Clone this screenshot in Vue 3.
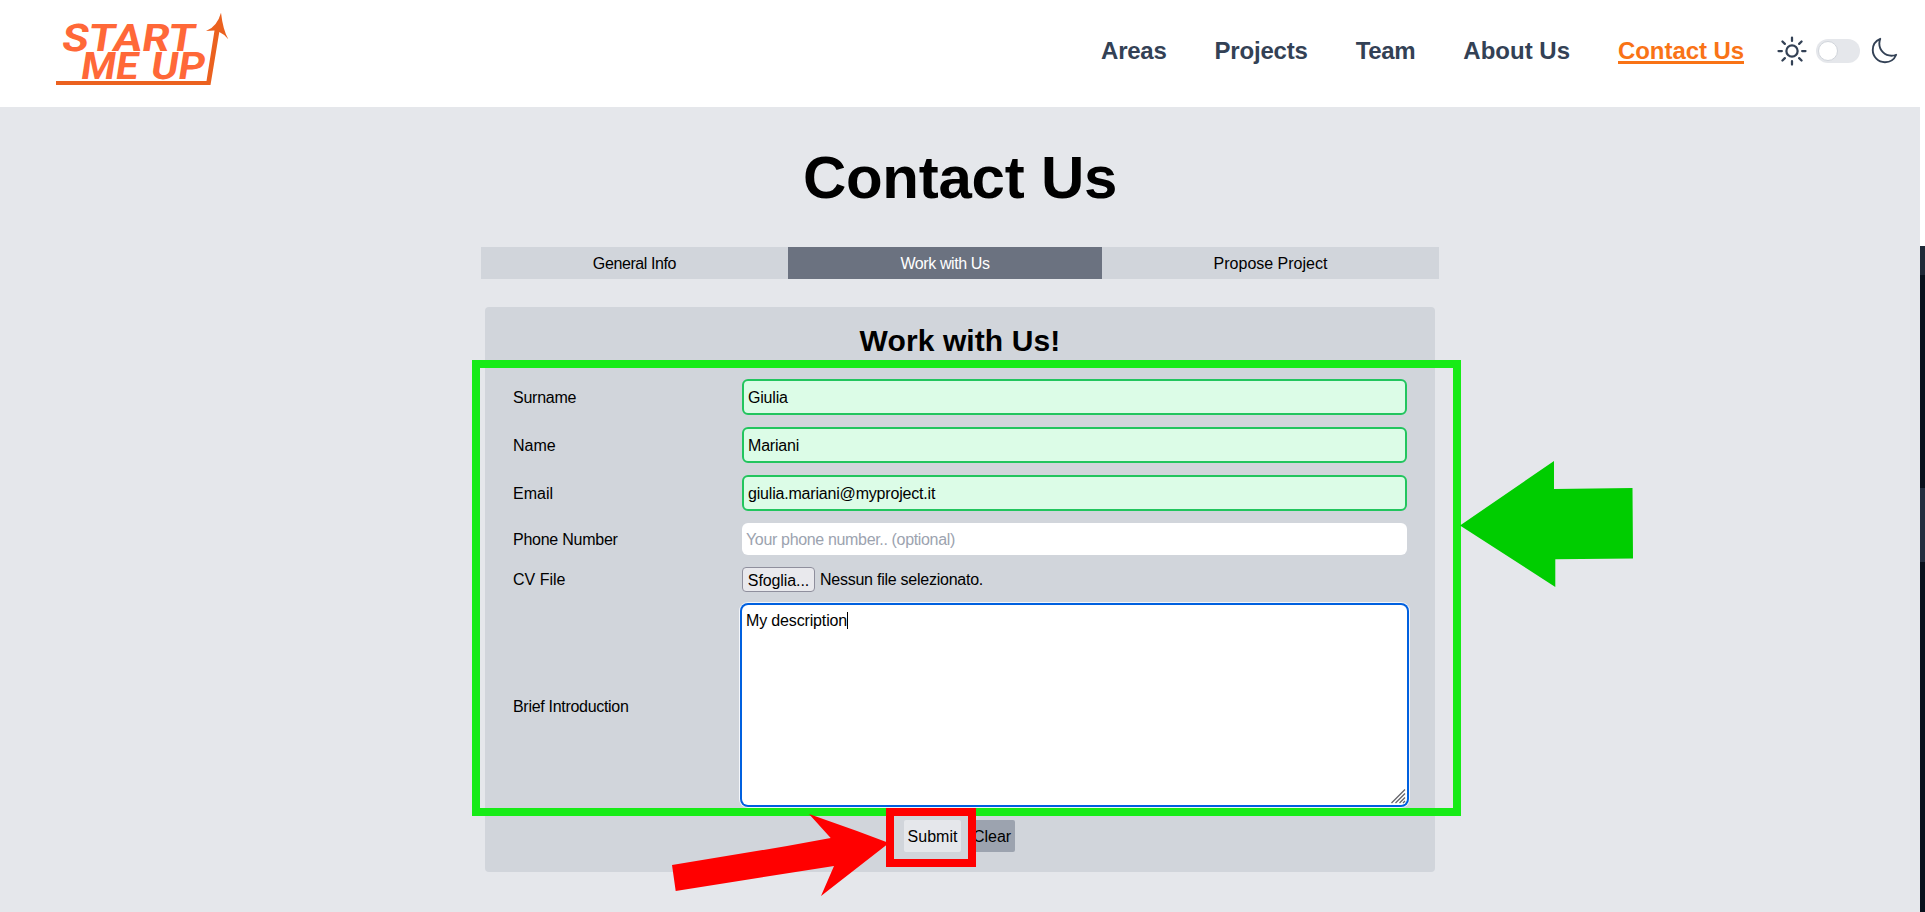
<script setup>
import { ref } from 'vue'

const links = [
  { label: 'Areas', cls: 'n-areas' },
  { label: 'Projects', cls: 'n-projects' },
  { label: 'Team', cls: 'n-team' },
  { label: 'About Us', cls: 'n-about' },
  { label: 'Contact Us', cls: 'n-contact' }
]
const current = 'Contact Us'
const tabs = [
  { label: 'General Info', cls: 'tab-info' },
  { label: 'Work with Us', cls: 'tab-work' },
  { label: 'Propose Project', cls: 'tab-propose' }
]
const activeTab = ref('Work with Us')
const surname = ref('Giulia')
const name = ref('Mariani')
const email = ref('giulia.mariani@myproject.it')
const phone = ref('')
</script>

<template>
  <div class="page">
    <div class="site">
      <header class="header">
        <svg class="logo" width="180" height="80" viewBox="52 8 180 80">
          <g class="logo-text">
            <text transform="translate(60.5 51) skewX(-9)" textLength="133" lengthAdjust="spacingAndGlyphs">START</text>
            <text transform="translate(79.5 79) skewX(-9)" textLength="57" lengthAdjust="spacingAndGlyphs">ME</text>
            <text transform="translate(149.500 79) skewX(-9)" textLength="54" lengthAdjust="spacingAndGlyphs">UP</text>
          </g>
          <path d="M56 81H206.500L214.500 30.500L206 31Q217 27 221 12.700Q223 30 228.300 39.200Q224 34 219.300 32L210.500 85H56Z" fill="#eb611f" />
        </svg>
        <nav class="nav">
          <a v-for="l in links" :key="l.label" class="nav-link" :class="[l.cls, { current: l.label === current }]">{{ l.label }}</a>
        </nav>
        <div class="theme">
          <svg class="sun" viewBox="0 0 24 24" width="36" height="36"><path d="M12 3v2.250m6.364.386l-1.591 1.591M21 12h-2.250m-.386 6.364l-1.591-1.591M12 18.750V21m-4.773-4.227l-1.591 1.591M5.250 12H3m4.227-4.773L5.636 5.636M15.750 12a3.750 3.750 0 11-7.500 0 3.750 3.750 0 017.500 0z" /></svg>
          <span class="toggle"><span class="knob"></span></span>
          <svg class="moon" viewBox="0 0 24 24" width="30" height="30"><path d="M21.752 15.002A9.718 9.718 0 0118 15.750c-5.385 0-9.750-4.365-9.750-9.750 0-1.330.266-2.597.748-3.752A9.753 9.753 0 003 11.250C3 16.635 7.365 21 12.750 21a9.753 9.753 0 009.002-5.998z" /></svg>
        </div>
      </header>

      <main class="main">
        <h1>Contact Us</h1>
        <div class="tabs">
          <button v-for="t in tabs" :key="t.label" class="tab" :class="[t.cls, { active: activeTab === t.label }]" @click="activeTab = t.label">{{ t.label }}</button>
        </div>
        <form class="card" @submit.prevent>
          <h2>Work with Us!</h2>
          <div class="fields">
            <label class="l-surname">Surname</label>
            <input v-model="surname" class="field valid" type="text" />
            <label>Name</label>
            <input v-model="name" class="field valid" type="text" />
            <label>Email</label>
            <input v-model="email" class="field valid" type="text" />
            <label class="l-phone">Phone Number</label>
            <input v-model="phone" class="field" type="text" placeholder="Your phone number.. (optional)" />
            <label class="l-cv">CV File</label>
            <div class="file"><span class="browse">Sfoglia...</span><span class="nofile">Nessun file selezionato.</span></div>
            <label class="l-brief">Brief Introduction</label>
            <div class="area">
              <span class="area-text">My description</span><span class="caret"></span>
              <svg class="grip" width="15" height="15" viewBox="0 0 15 15"><path d="M.5 14L14 .5M4.500 14L14 4.500M8.500 14L14 8.500M12 14L14 12" /></svg>
            </div>
          </div>
          <div class="actions">
            <button class="submit">Submit</button>
            <button class="clear">Clear</button>
          </div>
        </form>
      </main>
    </div>
    <aside class="edge"><i class="e1"></i><i class="e2"></i><i class="e3"></i><i class="e4"></i></aside>

    <svg class="notes" width="1925" height="912" viewBox="0 0 1925 912">
      <rect x="476" y="364" width="981" height="448" fill="none" stroke="#17eb17" stroke-width="8" />
      <path d="M1460 525.500L1554 461V489L1632.500 488L1633 558.500L1555.300 559.300V587Z" fill="#00cd00" />
      <path d="M889 843L857 831L809 814L830.700 838L787 846L672 865L675.700 891L834 866L821 896Z" fill="#f00" />
      <rect x="890" y="812" width="82" height="51" fill="none" stroke="#f00" stroke-width="8" />
    </svg>
  </div>
</template>

<style>
body { margin: 0; overflow: hidden; }
</style>

<style scoped>
.page { position: relative; display: flex; width: 1925px; height: 912px; overflow: hidden; background: #fff; color: #000; font-family: "Liberation Sans", Arial, sans-serif; font-size: 16px; line-height: 24px; }
.page * { box-sizing: border-box; }
.site { width: 1920px; display: flex; flex-direction: column; background: #e5e7eb; }
.header { height: 107px; flex: none; display: flex; align-items: flex-start; background: #fff; padding: 0 21px 0 52px; }
.logo { margin-top: 8px; }
.logo-text { font-family: Roboto, "Liberation Sans", sans-serif; font-size: 38px; font-weight: 700; fill: #ff6838; }
.nav { display: flex; gap: 48px; margin-left: auto; padding-top: 33px; }
.nav-link { font-size: 24px; line-height: 36px; font-weight: 700; color: #334155; white-space: nowrap; }
.n-areas { letter-spacing: -0.25px; }
.n-projects { letter-spacing: -0.2px; }
.n-team { letter-spacing: -0.3px; }
.n-contact { letter-spacing: -0.07px; }
.nav-link.current { color: #f97316; text-decoration: underline; text-decoration-thickness: 3px; text-underline-offset: 2px; }
.theme { display: flex; align-items: center; height: 36px; margin: 33px 0 0 30px; }
.theme svg { fill: none; stroke: #334155; stroke-width: 1.500; stroke-linecap: round; stroke-linejoin: round; flex: none; }
.toggle { width: 44px; height: 24px; border-radius: 12px; background: #e5e7eb; margin: 0 9px 0 6px; padding: 2px; }
.knob { display: block; width: 20px; height: 20px; border-radius: 50%; background: #fff; border: 1px solid #d1d5db; }
.main { display: flex; flex-direction: column; align-items: center; }
h1 { margin: 41px 0 0; font-size: 60px; line-height: 60px; font-weight: 700; letter-spacing: -0.25px; }
.tabs { display: flex; width: 958px; margin-top: 39px; }
button { font: inherit; color: inherit; border: 0; padding: 0; margin: 0; }
.tab { height: 32px; padding-top: 1px; background: #d1d5db; }
.tab-info { width: 307px; letter-spacing: -0.4px; }
.tab-work { width: 314px; letter-spacing: -0.4px; }
.tab-propose { width: 337px; }
.tab.active { background: #6b7280; color: #fff; }
.card { width: 950px; height: 565px; margin-top: 28px; background: #d1d5db; border-radius: 4px; padding: 16px 28px 0; }
h2 { margin: 0; text-align: center; font-size: 30px; line-height: 36px; font-weight: 700; letter-spacing: 0.1px; }
.fields { display: grid; grid-template-columns: 229px 665px; grid-template-rows: 36px 36px 36px 32px 25px 200px; row-gap: 12px; align-items: center; margin-top: 20px; }
.fields label { padding-top: 2px; }
.fields .l-surname { letter-spacing: -0.25px; }
.fields .l-phone { letter-spacing: -0.25px; }
.fields .l-cv { padding-top: 0; }
.fields .l-brief { padding-top: 6px; letter-spacing: -0.3px; }
.field { width: 665px; height: 32px; border: 0; border-radius: 6px; background: #fff; padding: 1px 4px 0; font: inherit; letter-spacing: -0.19px; color: #000; outline: none; }
.field::placeholder { color: #9ca3af; opacity: 1; letter-spacing: -0.34px; }
.field.valid { height: 36px; border: 2px solid #22c55e; background: #dcfce7; }
.file { display: flex; align-items: center; height: 25px; }
.browse { width: 73px; height: 25px; line-height: 25px; text-align: center; letter-spacing: -0.1px; border: 1px solid #8f8f9d; border-radius: 4px; background: #e9e9ed; }
.nofile { margin-left: 5px; padding-top: 1px; letter-spacing: -0.25px; }
.area { position: relative; top: 1px; width: 665px; height: 200px; display: flex; align-items: flex-start; background: #fff; border-radius: 6px; box-shadow: 0 0 0 2px #0060df, 0 0 0 3px #f4f6fa; padding: 4px; }
.area-text { letter-spacing: -0.15px; }
.caret { width: 1px; height: 17px; margin-top: 3px; background: #000; }
.grip { position: absolute; right: 1px; bottom: 1px; fill: none; stroke: #66666c; stroke-width: 1.3; }
.actions { display: flex; justify-content: center; gap: 8px; margin: 16px 1px 0 0; }
.actions button { height: 32px; border-radius: 2px; padding-top: 1px; }
.submit { width: 57px; background: #e5e7eb; }
.clear { width: 46px; background: #9ca3af; }
.edge { width: 5px; display: flex; flex-direction: column; }
.edge i { display: block; }
.e1 { height: 29px; margin-top: 246px; background: #1f2937; }
.e2 { height: 213px; background: #08111c; }
.e3 { height: 74px; background: #232f40; }
.e4 { flex: 1; background: #08111c; }
.notes { position: absolute; left: 0; top: 0; pointer-events: none; }
</style>
